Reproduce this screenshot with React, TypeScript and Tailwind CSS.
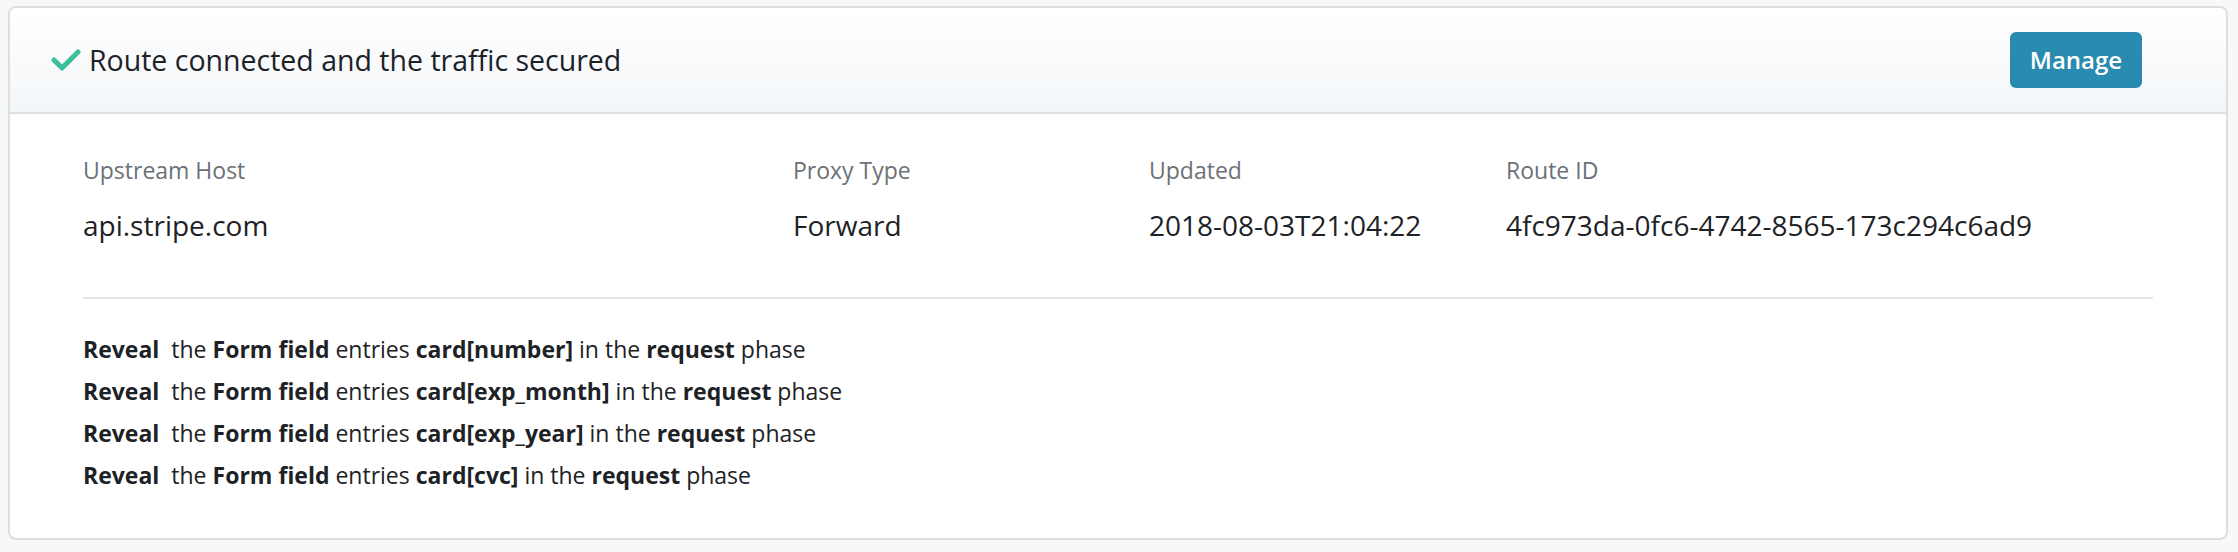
import React from 'react';

const fields = [
  { label: 'Upstream Host', value: 'api.stripe.com' },
  { label: 'Proxy Type', value: 'Forward' },
  { label: 'Updated', value: '2018-08-03T21:04:22' },
  { label: 'Route ID', value: '4fc973da-0fc6-4742-8565-173c294c6ad9' },
];

const entries = ['card[number]', 'card[exp_month]', 'card[exp_year]', 'card[cvc]'];

const CheckIcon = () => (
  <svg width="30" height="22" viewBox="0 0 30 22" className="shrink-0">
    <polyline
      points="3,11 11,19 27,3"
      fill="none"
      stroke="#3cbf9c"
      strokeWidth="5"
      strokeLinecap="round"
      strokeLinejoin="round"
    />
  </svg>
);

export default function App() {
  return (
    <div className="min-h-screen bg-[#f7f8f8] pt-[6px] pl-[8px] pr-[10px] font-['Open_Sans',sans-serif]">
      <div className="bg-white border-2 border-[#dedede] rounded-lg overflow-hidden">
        {/* Header */}
        <div className="h-[106px] flex items-center justify-between pl-[41px] pr-[84px] border-b-2 border-[#e0e0e0] bg-gradient-to-b from-white to-[#f3f6f9]">
          <div className="flex items-center gap-[8px]">
            <CheckIcon />
            <span className="text-[28.5px] text-[#1d2226]">Route connected and the traffic secured</span>
          </div>
          <button className="w-[132px] h-[56px] rounded-md bg-[#2a8bb0] text-white text-[24px] font-semibold">
            Manage
          </button>
        </div>

        {/* Body */}
        <div className="px-[73px] pt-[44px] pb-[42px]">
          <div className="grid grid-cols-[710px_356px_357px_1fr] pb-[57px] border-b-2 border-[#e6e6e6]">
            {fields.map((f) => (
              <div key={f.label} className="flex flex-col gap-[28px]">
                <span className="text-[23px] text-[#6b7177] leading-[24px]">{f.label}</span>
                <span className="text-[28px] text-[#1d2226] leading-[30px]">{f.value}</span>
              </div>
            ))}
          </div>

          <div className="pt-[29px] text-[23px] leading-[42px] text-[#1d2226]">
            {entries.map((e) => (
              <div key={e}>
                <b>Reveal</b>&nbsp; the <b>Form field</b> entries <b>{e}</b> in the <b>request</b> phase
              </div>
            ))}
          </div>
        </div>
      </div>
    </div>
  );
}
